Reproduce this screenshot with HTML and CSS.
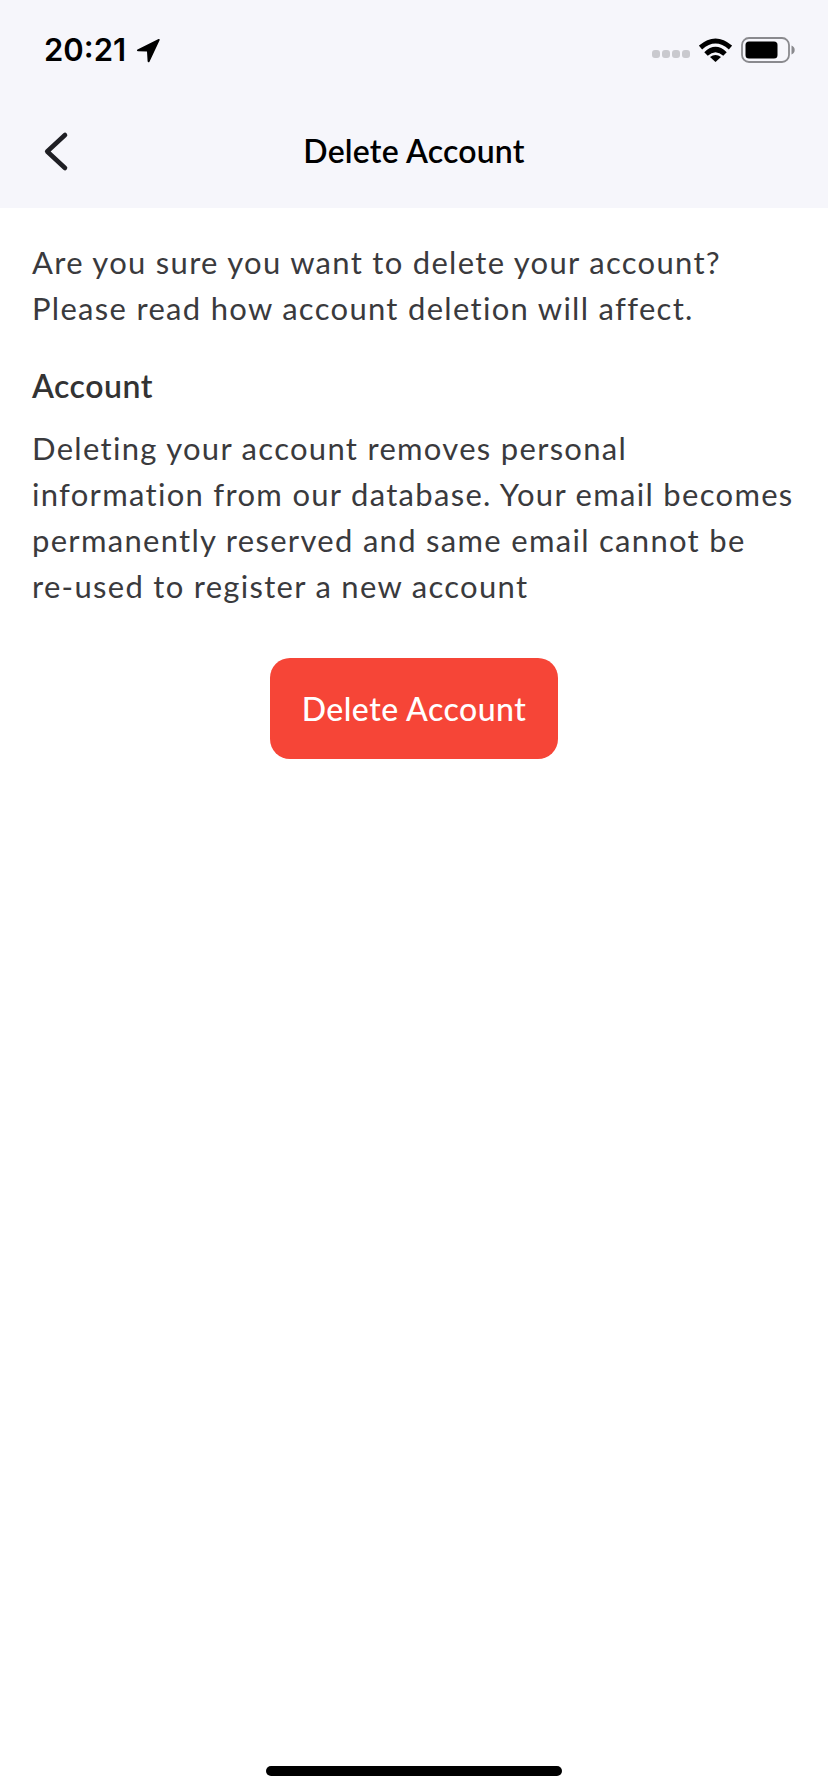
FILE: index.html
```html
<!DOCTYPE html>
<html lang="en">
<head>
<meta charset="utf-8">
<title>Delete Account</title>
<link rel="stylesheet" href="styles.css">
</head>
<body>
<div class="screen">
  <header class="top">
    <div class="status">
      <div class="time"><span>20:21</span>
        <svg class="loc" width="24" height="25" viewBox="0 0 24 25"><path d="M22.500 1 1.500 11.500c-1 .6-.6 1.800.5 1.800l9 .2.600 9.800c.1 1.200 1.400 1.400 1.900.4L23.600 2.300c.4-.9-.3-1.600-1.100-1.300z" fill="#000"/></svg>
      </div>
      <div class="indicators">
        <div class="dots"><i></i><i></i><i></i><i></i></div>
        <svg class="wifi" width="33" height="24" viewBox="0 0 33 24"><path d="M1.500 9.500Q16.500-3.500 31.500 9.500M7 16Q16.500 7 26 16" fill="none" stroke="#000" stroke-width="5"/><path d="M16.500 24 11 19Q16.500 15 22 19z" fill="#000"/></svg>
        <svg class="battery" width="54" height="26" viewBox="0 0 54 26"><rect x="1" y="1" width="47" height="24" rx="7" fill="none" stroke="#8a8a8e" stroke-width="1.800"/><rect x="4.500" y="4.500" width="32" height="17" rx="3.500" fill="#000"/><path d="M50.500 8.500c2 .7 3.200 2.400 3.200 4.500s-1.200 3.800-3.200 4.500z" fill="#8a8a8e"/></svg>
      </div>
    </div>
    <nav class="nav">
      <svg class="back" width="26" height="41" viewBox="0 0 26 41"><path d="M22 4 4.200 20.500 22 37" fill="none" stroke="#1f1f24" stroke-width="4.600" stroke-linecap="round" stroke-linejoin="round"/></svg>
      <h1>Delete Account</h1>
    </nav>
  </header>
  <main class="content">
    <p class="body">Are you sure you want to delete your account?<br>Please read how account deletion will affect.</p>
    <h2>Account</h2>
    <p class="body">Deleting your account removes personal<br>information from our database. Your email becomes<br>permanently reserved and same email cannot be<br>re-used to register a new account</p>
    <div class="actions"><button class="danger">Delete Account</button></div>
  </main>
  <div class="home"></div>
</div>
</body>
</html>
```
FILE: styles.css
```css
* { box-sizing: border-box; }
html, body { margin: 0; padding: 0; background: #fff; }
.screen { width: 828px; height: 1792px; position: relative; font-family: "Lato", "Noto Sans", sans-serif; color: #333; }
.top { background: #f6f6fb; height: 208px; }
.status { height: 100px; display: flex; justify-content: space-between; align-items: center; padding: 0 33px 0 44px; }
.time { display: flex; align-items: center; gap: 10px; font: 600 31px/40px "Inter", sans-serif; color: #000; }
.indicators { display: flex; align-items: center; }
.dots { display: flex; gap: 2px; margin-top: 8px; margin-right: 9px; }
.dots i { width: 8px; height: 8px; border-radius: 3px; background: #c9c9ce; display: block; }
.battery { margin-left: 9px; }
.nav { height: 108px; position: relative; display: flex; align-items: center; justify-content: center; padding-bottom: 6px; }
.back { position: absolute; left: 43px; top: 31px; }
h1 { margin: 0; font: 600 32px/40px "Lato", sans-serif; letter-spacing: 0.2px; color: #000; }
.content { padding: 31px 32px 0; }
.body { margin: 0; font: 400 31px/46px "Lato", sans-serif; letter-spacing: 1.3px; color: #3a3a3d; }
h2 { margin: 32px 0 16px; font: 600 32px/46px "Lato", sans-serif; letter-spacing: 0.5px; color: #333; }
.actions { display: flex; justify-content: center; margin-top: 49px; }
.danger { width: 288px; height: 101px; border: 0; border-radius: 20px; background: #f64537; color: #fff; font: 500 32px/40px "Lato", sans-serif; letter-spacing: 0.5px; }
.home { position: absolute; left: 266px; bottom: 16px; width: 296px; height: 10px; border-radius: 5px; background: #000; }
```
